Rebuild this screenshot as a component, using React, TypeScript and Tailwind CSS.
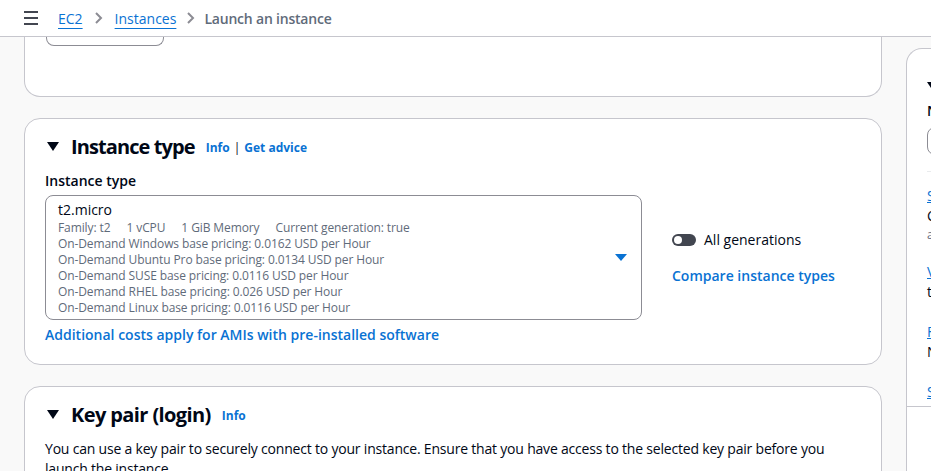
import React from "react";

const blue = "text-[#0972d3]";

function Caret({ className }: { className?: string }) {
  return (
    <svg width="12" height="10" viewBox="0 0 12 10" className={className}>
      <polygon points="0,0 12,0 6,9" fill="currentColor" />
    </svg>
  );
}

function Chevron({ className }: { className?: string }) {
  return (
    <svg width="10" height="14" viewBox="0 0 10 14" className={`text-[#8c8c94] ${className}`}>
      <polyline points="2,2 7,7 2,12" fill="none" stroke="currentColor" strokeWidth="2" />
    </svg>
  );
}

const pricing = [
  "On-Demand Windows base pricing: 0.0162 USD per Hour",
  "On-Demand Ubuntu Pro base pricing: 0.0134 USD per Hour",
  "On-Demand SUSE base pricing: 0.0116 USD per Hour",
  "On-Demand RHEL base pricing: 0.026 USD per Hour",
  "On-Demand Linux base pricing: 0.0116 USD per Hour",
];

export default function App() {
  return (
    <div className="w-[931px] h-[471px] overflow-hidden bg-[#f9f9f9] font-['Open_Sans',sans-serif] text-[#000716]">
      {/* HEADER */}
      <div className="h-[37px] bg-white border-b border-[#c6c6cd] flex items-center pl-[24px] text-[14px]">
        <div className="flex flex-col gap-[4px] w-[14px] mr-[20px]">
          <span className="h-[2px] bg-[#424650]" />
          <span className="h-[2px] bg-[#424650]" />
          <span className="h-[2px] bg-[#424650]" />
        </div>
        <a className={`${blue} underline underline-offset-[4px] decoration-1`}>EC2</a>
        <Chevron className="mx-[11px]" />
        <a className={`${blue} underline underline-offset-[4px] decoration-1`}>Instances</a>
        <Chevron className="ml-[10px] mr-[8px]" />
        <span className="font-semibold text-[#5f6b7a] tracking-[-0.2px]">Launch an instance</span>
      </div>

      <div className="flex h-[434px] overflow-hidden">
        {/* MAIN */}
        <div className="w-[882px] shrink-0 pl-[24px] flex flex-col gap-[21px]">
          <div className="h-[60px] shrink-0 bg-white border-x border-b border-[#c6c6cd] rounded-b-[16px]">
            <div className="ml-[21px] w-[118px] h-[9px] border-x border-b border-[#8c8c94] rounded-b-[8px]" />
          </div>

          {/* INSTANCE TYPE */}
          <div className="shrink-0 bg-white border border-[#c6c6cd] rounded-[16px] pt-[16px] pb-[19px] px-[20px]">
            <div className="flex items-center h-[24px]">
              <Caret className="ml-[2px] mr-[12px]" />
              <h2 className="text-[20px] font-bold leading-[24px] tracking-[-0.9px]">Instance type</h2>
              <a className={`${blue} text-[12px] font-bold ml-[11px] mt-[2px]`}>Info</a>
              <span className="text-[12px] mx-[4px] mt-[2px]">|</span>
              <a className={`${blue} text-[12px] font-bold mt-[2px]`}>Get advice</a>
            </div>
            <p className="mt-[12px] text-[14px] leading-[20px] font-semibold">Instance type</p>
            <div className="mt-[4px] flex items-center">
              <div className="w-[597px] border border-[#8c8c94] rounded-[8px] pl-[12px] pr-[14px] pt-[4px] pb-[3px] flex items-center">
                <div className="flex-1">
                  <p className="text-[14px] leading-[20px]">t2.micro</p>
                  <p className="text-[12px] leading-[16px] text-[#5f6b7a] tracking-[-0.1px]">
                    Family: t2<span className="ml-[16px]">1 vCPU</span>
                    <span className="ml-[16px]">1 GiB Memory</span>
                    <span className="ml-[16px]">Current generation: true</span>
                  </p>
                  {pricing.map((p) => (
                    <p key={p} className="text-[12px] leading-[16px] text-[#5f6b7a] tracking-[-0.1px]">
                      {p}
                    </p>
                  ))}
                </div>
                <svg width="12" height="8" viewBox="0 0 12 8" className="text-[#0972d3]">
                  <polygon points="0,0 12,0 6,7" fill="currentColor" />
                </svg>
              </div>

              <div className="ml-[30px] flex flex-col gap-[16px] text-[14px] leading-[20px]">
                <div className="flex items-center">
                  <span className="w-[24px] h-[12px] rounded-full bg-[#424650] flex items-center px-[2px]">
                    <span className="w-[8px] h-[8px] rounded-full bg-white" />
                  </span>
                  <span className="ml-[8px]">All generations</span>
                </div>
                <a className={`${blue} font-semibold`}>Compare instance types</a>
              </div>
            </div>
            <a className={`${blue} block mt-[5px] text-[14px] leading-[20px] font-semibold`}>
              Additional costs apply for AMIs with pre-installed software
            </a>
          </div>

          {/* KEY PAIR */}
          <div className="shrink-0 bg-white border border-[#c6c6cd] rounded-[16px] pt-[16px] pb-[20px] px-[20px]">
            <div className="flex items-center h-[24px]">
              <Caret className="ml-[2px] mr-[12px]" />
              <h2 className="text-[20px] font-bold leading-[24px] tracking-[-0.6px]">Key pair (login)</h2>
              <a className={`${blue} text-[12px] font-bold ml-[11px] mt-[2px]`}>Info</a>
            </div>
            <p className="mt-[12px] text-[14px] leading-[20px] text-[#000716] tracking-[-0.2px]">
              You can use a key pair to securely connect to your instance. Ensure that you have access to the
              selected key pair before you launch the instance.
            </p>
          </div>
        </div>

        {/* SUMMARY */}
        <div className="ml-[24px] w-[300px] shrink-0 mt-[11px] bg-white border-l border-t border-[#c6c6cd] rounded-tl-[16px]">
          <div className="border-b border-[#c6c6cd] pl-[20px] pt-[26px] pb-[4px]">
            <div className="flex items-center h-[24px]">
              <Caret className="mr-[10px]" />
              <span className="text-[18px] font-bold">Summary</span>
            </div>
            <p className="mt-[2px] text-[14px] leading-[20px] font-semibold">Number of instances</p>
            <div className="mt-[6px] w-[200px] h-[28px] border border-[#8c8c94] rounded-[8px] px-[12px] text-[14px] leading-[26px]">
              1
            </div>
            <div className="mt-[16px] mr-[20px] border-t border-[#e9ebed]" />
            <div className="pt-[14px] text-[14px] leading-[20px]">
              <a className={`${blue} underline`}>Software Image (AMI)</a>
              <p>Canonical, Ubuntu, 24.04, amd64...</p>
              <p className="text-[12px] leading-[18px] text-[#5f6b7a]">ami-0e2c8caa4b6378d8c</p>
              <a className={`${blue} underline block mt-[18px]`}>Virtual server type (instance type)</a>
              <p>t2.micro</p>
              <a className={`${blue} underline block mt-[20px]`}>Firewall (security group)</a>
              <p>New security group</p>
              <a className={`${blue} underline block mt-[20px]`}>Storage (volumes)</a>
            </div>
          </div>
        </div>
      </div>
    </div>
  );
}
